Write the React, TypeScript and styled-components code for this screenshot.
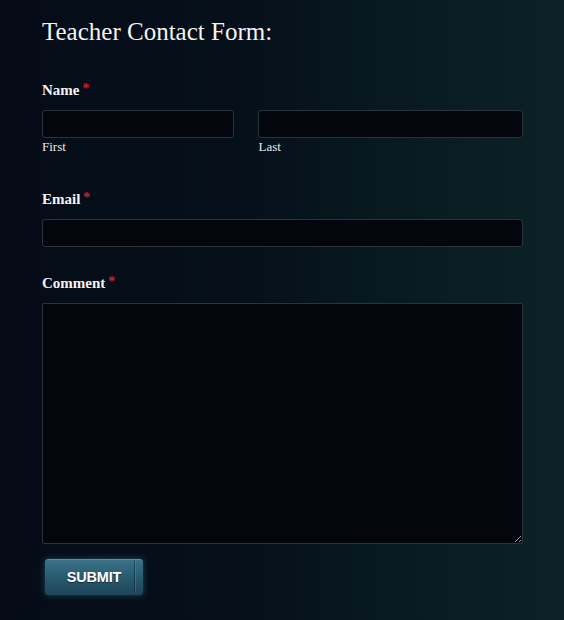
import styled, { createGlobalStyle } from "styled-components";

const GlobalStyle = createGlobalStyle`
  html, body {
    margin: 0;
    padding: 0;
    height: 100%;
  }
  body {
    background: linear-gradient(90deg, #050c17 0%, #06101a 45%, #081a20 70%, #0b2226 100%);
    font-family: "Liberation Serif", "Times New Roman", serif;
    color: #f2f2f2;
  }
`;

export default function App() {
  return (
    <>
      <GlobalStyle />
      <Page>
        <Title>Teacher Contact Form:</Title>
        <Form onSubmit={(e) => e.preventDefault()}>
          <Field $gap={36}>
            <Label>
              Name<Required>*</Required>
            </Label>
            <NameRow>
              <SubField $grow={40}>
                <TextInput type="text" />
                <SubLabel>First</SubLabel>
              </SubField>
              <SubField $grow={55}>
                <TextInput type="text" />
                <SubLabel>Last</SubLabel>
              </SubField>
            </NameRow>
          </Field>
          <Field $gap={27}>
            <Label>
              Email<Required>*</Required>
            </Label>
            <TextInput type="email" />
          </Field>
          <Field $gap={14}>
            <Label>
              Comment<Required>*</Required>
            </Label>
            <TextArea />
          </Field>
          <SubmitButton type="submit">
            SUBMIT
            <ButtonEdge />
          </SubmitButton>
        </Form>
      </Page>
    </>
  );
}

const Page = styled.div`
  padding: 17px 41px 0 42px;
  display: flex;
  flex-direction: column;
`;

const Title = styled.h1`
  margin: 0;
  font-size: 25px;
  font-weight: normal;
  line-height: 30px;
  color: #f4f4f4;
`;

const Form = styled.form`
  display: flex;
  flex-direction: column;
  margin-top: 34px;
`;

const Field = styled.div<{ $gap: number }>`
  display: flex;
  flex-direction: column;
  margin-bottom: ${(p) => p.$gap}px;
`;

const Label = styled.label`
  font-size: 15px;
  font-weight: bold;
  line-height: 18px;
  color: #f4f4f4;
  margin-bottom: 10px;
`;

const Required = styled.span`
  position: relative;
  top: -2px;
  color: #c0262e;
  margin-left: 3px;
  font-size: 14px;
`;

const NameRow = styled.div`
  display: flex;
  justify-content: space-between;
`;

const SubField = styled.div<{ $grow: number }>`
  display: flex;
  flex-direction: column;
  width: ${(p) => p.$grow}%;
`;

const SubLabel = styled.span`
  font-size: 13px;
  line-height: 14px;
  margin-top: 2px;
  color: #ececec;
`;

const TextInput = styled.input`
  box-sizing: border-box;
  width: 100%;
  height: 28px;
  background: #03060d;
  border: 1px solid #2b3438;
  border-radius: 3px;
  color: #ffffff;
  outline: none;
`;

const TextArea = styled.textarea`
  box-sizing: border-box;
  width: 100%;
  height: 241px;
  background: #03060d;
  border: 1px solid #2b3438;
  border-radius: 2px;
  color: #ffffff;
  outline: none;
  resize: vertical;
  color-scheme: dark;
`;

const SubmitButton = styled.button`
  position: relative;
  box-sizing: border-box;
  align-self: flex-start;
  margin-left: 2px;
  width: 100px;
  height: 38px;
  padding: 0;
  border: 1px solid #0f2a36;
  border-radius: 4px;
  background: linear-gradient(180deg, #3b7388 0%, #2a5d72 45%, #1d4557 100%);
  box-shadow: 0 0 6px rgba(60, 130, 150, 0.35), inset 0 1px 0 rgba(140, 200, 215, 0.35);
  color: #ffffff;
  font-family: "Liberation Sans", Arial, sans-serif;
  font-size: 14.5px;
  font-weight: bold;
  letter-spacing: -0.2px;
  text-shadow: 0 1px 1px rgba(0, 0, 0, 0.5);
  cursor: pointer;
`;

const ButtonEdge = styled.span`
  position: absolute;
  top: 2px;
  bottom: 2px;
  right: 8px;
  width: 1px;
  background: rgba(15, 40, 52, 0.6);
  box-shadow: 1px 0 0 rgba(120, 180, 200, 0.25);
`;
